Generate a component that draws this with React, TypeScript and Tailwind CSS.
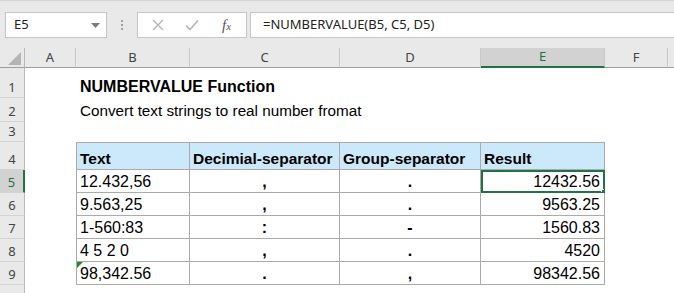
import React from "react";

const cols = "grid grid-cols-[25px_51px_114px_150px_141px_124px_63px_1fr]";

const rows = [
  { text: "12.432,56", dec: ",", grp: ".", res: "12432.56" },
  { text: "9.563,25", dec: ",", grp: ".", res: "9563.25" },
  { text: "1-560:83", dec: ":", grp: "-", res: "1560.83" },
  { text: "4 5 2 0", dec: ",", grp: ".", res: "4520" },
  { text: "98,342.56", dec: ".", grp: ",", res: "98342.56" },
];

const RowHead = ({ n, h, active }: { n?: number; h: string; active?: boolean }) => (
  <div
    className={`${h} flex items-end justify-center pb-[2px] border-b border-[#d4d4d4] text-[13px] leading-[16px] font-['Noto_Sans',sans-serif] ${
      active ? "bg-[#d2d2d2] text-[#217346] border-r-2 border-r-[#217346]" : "bg-[#e9e9e9] text-[#444] border-r border-r-[#bababa]"
    }`}
  >
    {n}
  </div>
);

const FormulaBar = () => (
  <div className="h-[48px] bg-[#e9e9e9] border-t border-[#d6d6d6] flex items-start pt-[11px] pl-[5px] text-[13px]">
    <div className="w-[102px] h-[26px] bg-white border border-[#c6c6c6] flex items-center justify-between pl-[8px] pr-[6px] text-[#222]">
      <span>E5</span>
      <svg width="9" height="5" viewBox="0 0 9 5">
        <path d="M0 0h9L4.5 5z" fill="#7a7a7a" />
      </svg>
    </div>
    <div className="w-[30px] h-[26px] flex flex-col items-center justify-center gap-[2px]">
      <span className="w-[2px] h-[2px] bg-[#a0a0a0]" />
      <span className="w-[2px] h-[2px] bg-[#a0a0a0]" />
      <span className="w-[2px] h-[2px] bg-[#a0a0a0]" />
    </div>
    <div className="w-[110px] h-[26px] bg-white border border-[#c6c6c6] flex items-center">
      <svg className="ml-[14px]" width="12" height="12" viewBox="0 0 12 12">
        <path d="M1 1l10 10M11 1L1 11" stroke="#b5b5b5" strokeWidth="1.4" />
      </svg>
      <svg className="ml-[21px]" width="14" height="12" viewBox="0 0 14 12">
        <path d="M1 6.5l4 4L13 1.5" stroke="#b5b5b5" strokeWidth="1.6" fill="none" />
      </svg>
      <span className="ml-[23px] text-[#555] italic text-[15px] font-['Liberation_Serif',serif] leading-none">
        f<span className="text-[11px]">x</span>
      </span>
    </div>
    <div className="flex-1 h-[26px] ml-[3px] bg-white border border-r-0 border-[#c6c6c6] flex items-center pl-[12px] text-[#222]">
      =NUMBERVALUE(B5, C5, D5)
    </div>
  </div>
);

const ColHeader = () => {
  const hd = "h-[20px] flex items-center justify-center text-[13px] text-[#444] border-b border-[#9e9e9e] border-r border-r-[#c8c8c8]";
  return (
    <div className={`${cols} bg-[#e9e9e9]`}>
      <div className="h-[20px] border-b border-[#9e9e9e] border-r border-r-[#bababa] relative">
        <svg className="absolute left-[8px] top-[4px]" width="13" height="13" viewBox="0 0 13 13">
          <path d="M13 0v13H0z" fill="#b4b4b4" />
        </svg>
      </div>
      <div className={hd}>A</div>
      <div className={hd}>B</div>
      <div className={hd}>C</div>
      <div className={hd}>D</div>
      <div className="h-[20px] flex items-center justify-center text-[13px] text-[#217346] bg-[#d2d2d2] border-b-2 border-[#217346] border-r border-r-[#c8c8c8]">
        E
      </div>
      <div className={hd}>F</div>
      <div className="h-[20px] border-b border-[#9e9e9e]" />
    </div>
  );
};

export default function App() {
  const cell = "flex items-end pb-[1px] border-r border-b border-[#ababab] overflow-hidden whitespace-nowrap";
  const head = "font-bold text-[15.5px] bg-[#cce9fb] border-t";
  return (
    <div className="w-[674px] h-[293px] overflow-hidden bg-white font-['Noto_Sans',sans-serif]">
      <FormulaBar />
      <ColHeader />
      <div className="font-['Liberation_Sans',Arial,sans-serif] text-[16px] leading-[18px] text-black">
        <div className={cols}>
          <RowHead n={1} h="h-[30px]" />
          <div />
          <div className="col-span-4 flex items-end pb-[2px] pl-[4px] font-bold whitespace-nowrap">
            NUMBERVALUE Function
          </div>
        </div>
        <div className={cols}>
          <RowHead n={2} h="h-[24px]" />
          <div />
          <div className="col-span-4 flex items-end pb-[2px] pl-[4px] text-[15.25px] whitespace-nowrap">
            Convert text strings to real number fromat
          </div>
        </div>
        <div className={cols}>
          <RowHead n={3} h="h-[20px]" />
        </div>
        <div className={cols}>
          <RowHead n={4} h="h-[28px]" />
          <div />
          <div className={`${cell} ${head} border-l pl-[3px]`}>Text</div>
          <div className={`${cell} ${head} pl-[3px]`}>Decimial-separator</div>
          <div className={`${cell} ${head} pl-[3px]`}>Group-separator</div>
          <div className={`${cell} ${head} pl-[3px]`}>Result</div>
        </div>
        {rows.map((r, i) => (
          <div className={cols} key={i}>
            <RowHead n={i + 5} h="h-[23px]" active={i === 0} />
            <div />
            <div className={`${cell} border-l pl-[3px] relative`}>
              {i === 4 && (
                <svg className="absolute left-0 top-0" width="6" height="6" viewBox="0 0 6 6">
                  <path d="M0 0h6L0 6z" fill="#1e8c2f" />
                </svg>
              )}
              {r.text}
            </div>
            <div className={`${cell} justify-center font-bold`}>{r.dec}</div>
            <div className={`${cell} justify-center font-bold`}>{r.grp}</div>
            <div
              className={`${cell} justify-end pr-[4px] relative ${
                i === 0 ? "outline-2 outline-[#217346] -outline-offset-2" : ""
              }`}
            >
              {r.res}
              {i === 0 && <span className="absolute right-[-3px] bottom-[-3px] w-[6px] h-[6px] bg-[#217346] border border-white" />}
            </div>
          </div>
        ))}
        <div className={cols}>
          <RowHead h="h-[23px]" />
        </div>
      </div>
    </div>
  );
}
